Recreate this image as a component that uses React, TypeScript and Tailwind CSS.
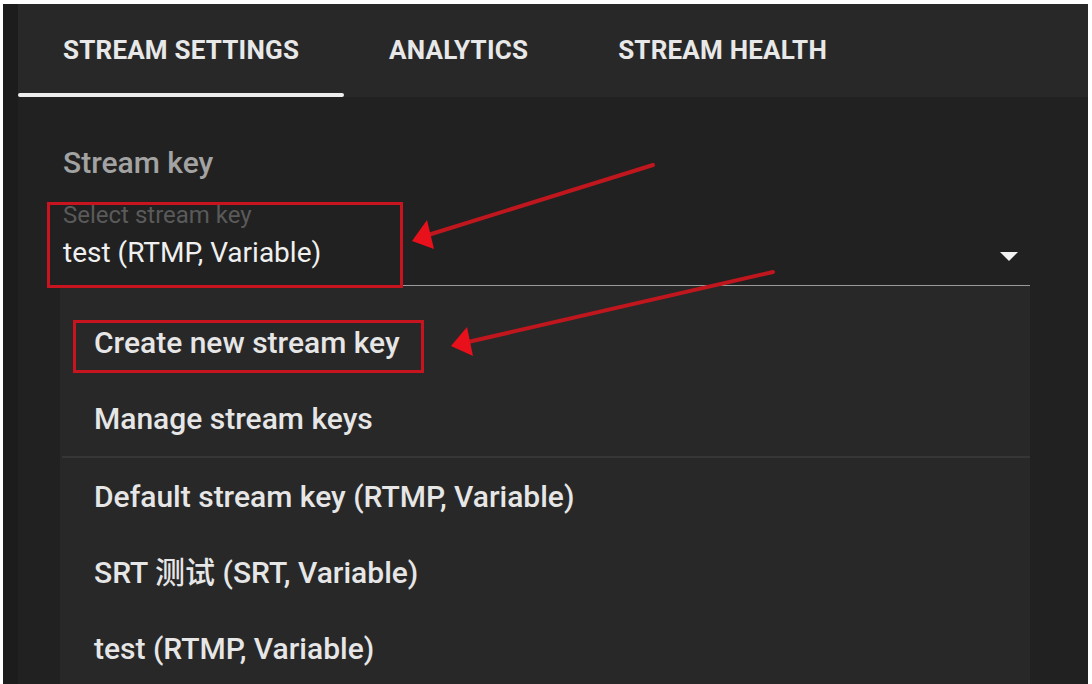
import React from "react";

const font = { fontFamily: "Roboto, 'Noto Sans CJK SC', sans-serif" };

function Tab({ label, active }: { label: string; active?: boolean }) {
  return (
    <div className="relative flex h-full items-center px-[45px]">
      <span className="text-[26px] font-bold uppercase tracking-[0.2px] text-[#e8e8e8]">{label}</span>
      {active && <div className="absolute bottom-0 left-0 right-0 h-[4px] rounded-sm bg-[#eeeeee]" />}
    </div>
  );
}

function Item({ children }: { children: React.ReactNode }) {
  return (
    <div className="flex h-[76px] items-center pl-[32px] text-[30px] font-medium text-[#e6e6e6]">{children}</div>
  );
}

export default function App() {
  return (
    <div className="relative h-[684px] w-[1092px] overflow-hidden bg-white" style={font}>
      <div className="absolute bottom-0 left-[3px] right-[4px] top-[4px] flex bg-[#1c1c1c] pl-[15px]">
        <div className="flex flex-1 flex-col bg-[#212121]">
          <div className="flex h-[93px] shrink-0 items-stretch bg-[#282828]">
            <Tab label="Stream Settings" active />
            <Tab label="Analytics" />
            <Tab label="Stream Health" />
          </div>
          <div className="flex flex-1 flex-col pl-[42px] pr-[58px]">
            <div className="mt-[48px] pl-[3px] text-[30px] font-medium leading-[36px] text-[#a3a3a3]">Stream key</div>
            <div className="mt-[21px] flex items-end border-b border-[#9a9a9a] pb-[16px] pl-[3px]">
              <div className="flex flex-1 flex-col">
                <span className="text-[24px] leading-[26px] text-[#5a5a5a]">Select stream key</span>
                <span className="mt-[9px] text-[28px] leading-[32px] text-[#f0f0f0]">test (RTMP, Variable)</span>
              </div>
              <svg width="18" height="10" viewBox="0 0 18 10" className="mb-[7px] mr-[12px]">
                <path d="M0 0 L18 0 L9 9 Z" fill="#f2f2f2" />
              </svg>
            </div>
            <div className="flex flex-1 flex-col bg-[#282828] pl-[2px] pt-[18px]">
              <Item>Create new stream key</Item>
              <Item>Manage stream keys</Item>
              <div className="h-[2px] bg-[#363636]" />
              <Item>Default stream key (RTMP, Variable)</Item>
              <Item>SRT 测试 (SRT, Variable)</Item>
              <Item>test (RTMP, Variable)</Item>
            </div>
          </div>
        </div>
      </div>

      {/* annotations */}
      <div className="absolute left-[47px] top-[202px] h-[86px] w-[356px] border-[3px] border-[#c8141e]" />
      <div className="absolute left-[73px] top-[320px] h-[53px] w-[351px] border-[3px] border-[#c8141e]" />
      <svg className="pointer-events-none absolute left-0 top-0" width="1092" height="684" viewBox="0 0 1092 684">
        <line x1="653" y1="165" x2="428" y2="235" stroke="#c0161e" strokeWidth="4" strokeLinecap="round" />
        <polygon points="412,241 427,220 434,249" fill="#e8101a" />
        <line x1="773" y1="272" x2="468" y2="342" stroke="#c0161e" strokeWidth="4" strokeLinecap="round" />
        <polygon points="451,346 467,327 473,356" fill="#e8101a" />
      </svg>
    </div>
  );
}
